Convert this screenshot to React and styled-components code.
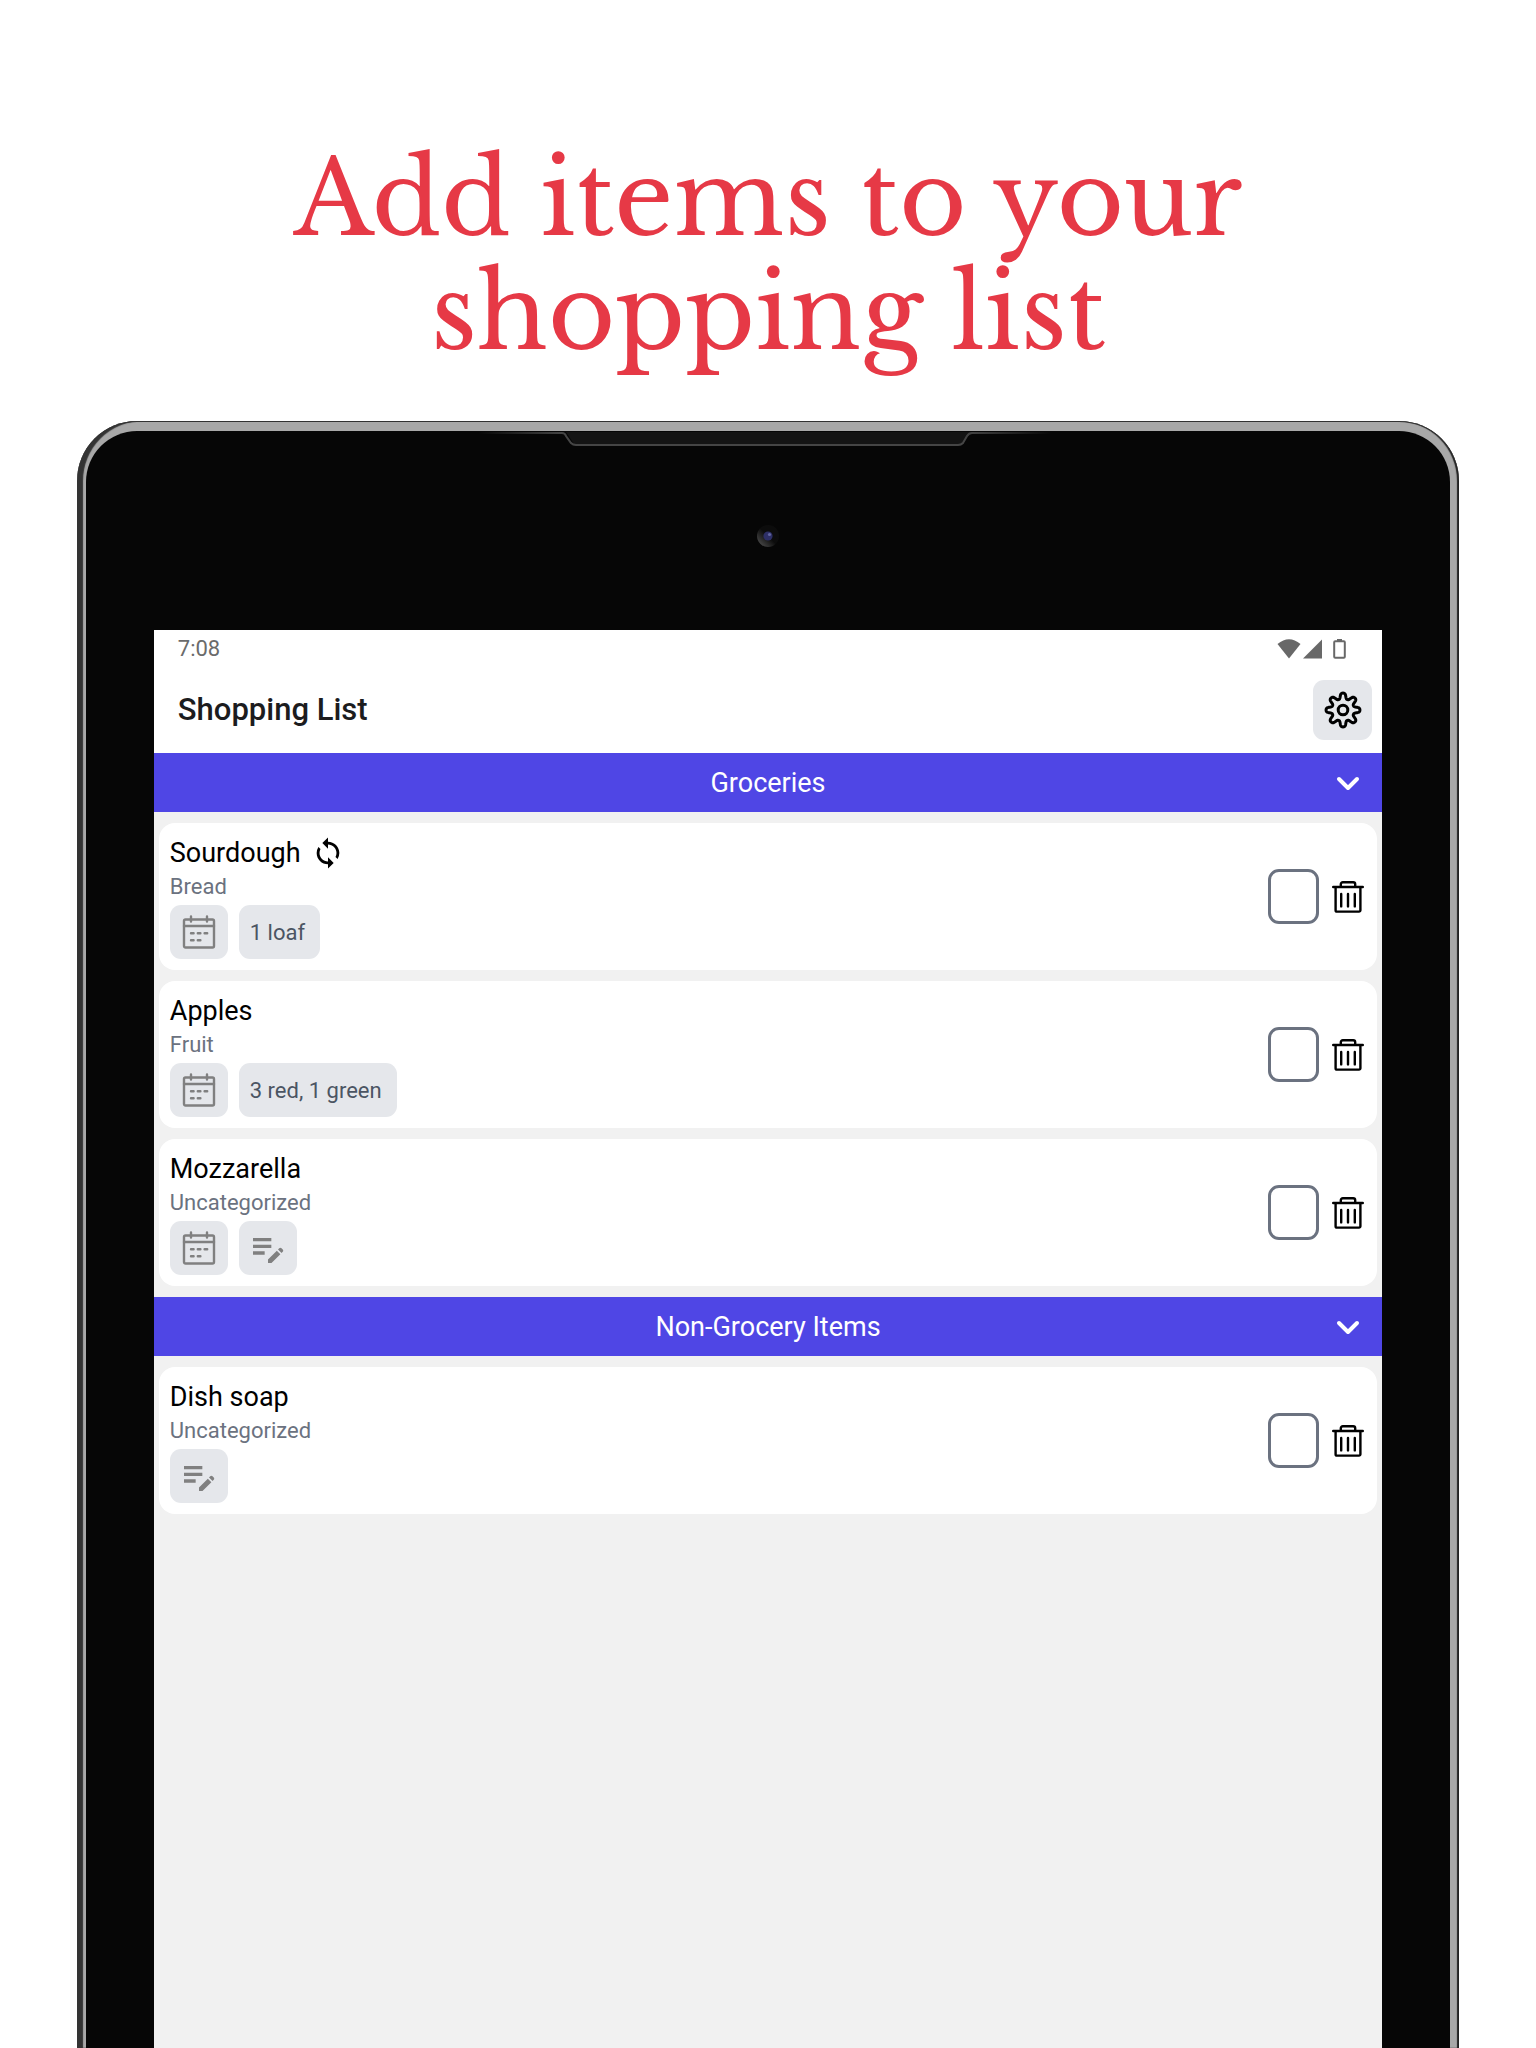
import React, { useState } from "react";
import styled, { createGlobalStyle } from "styled-components";
import { MdEditNote, MdSync } from "react-icons/md";

const GlobalStyle = createGlobalStyle`
  *, *::before, *::after { box-sizing: border-box; }
  html, body { margin: 0; background: #fff; }
  button { font: inherit; color: inherit; border: 0; padding: 0; cursor: pointer; }
  svg { display: block; flex: none; }
`;

const Page = styled.div`
  min-height: 100vh;
  display: flex;
  flex-direction: column;
  font-family: Roboto, "Liberation Sans", sans-serif;
  color: #000;
`;

const Headline = styled.h1`
  margin: 0 auto;
  padding: 142px 24px 51px;
  max-width: 1120px;
  text-align: center;
  font-family: "Libre Baskerville", "Liberation Serif", serif;
  font-weight: 400;
  font-size: 103px;
  line-height: 114px;
  color: #e63946;
`;

const Device = styled.main`
  flex: 1;
  display: flex;
  margin: 0 5%;
  padding: 10px 9px 0;
  border-radius: 60px 60px 0 0;
  background: #a8a8a8;
  box-shadow: inset 0 1px 0 #333, inset 6px 0 1px #333, inset -2px 0 1px #222;
`;

const Bezel = styled.div`
  flex: 1;
  display: flex;
  flex-direction: column;
  padding: 0 68px;
  border-radius: 51px 51px 0 0;
  background: #060606;
`;

const BezelTop = styled.div`
  height: 199px;
  display: flex;
  flex-direction: column;
  align-items: center;
  gap: 77px;
`;

const Screen = styled.div`
  flex: 1;
  display: flex;
  flex-direction: column;
  background: #f1f1f1;
`;

const StatusBar = styled.div`
  height: 37px;
  padding: 0 36px 0 24px;
  display: flex;
  align-items: center;
  justify-content: space-between;
  background: #fff;
  color: #6b6b6b;
  font-size: 22px;
`;

const AppBar = styled.header`
  height: 86px;
  padding: 0 10px 0 24px;
  display: flex;
  align-items: center;
  justify-content: space-between;
  background: #fff;
`;

const ScreenTitle = styled.h2`
  margin: 0;
  font-weight: 500;
  font-size: 31px;
  line-height: 38px;
  color: #1c1c1e;
`;

const SettingsButton = styled.button`
  width: 59px;
  height: 60px;
  display: grid;
  place-items: center;
  border-radius: 11px;
  background: #e5e7eb;
`;

const GroupHeader = styled.button`
  width: 100%;
  height: 59px;
  padding: 0 21px;
  display: grid;
  grid-template-columns: 1fr auto 1fr;
  align-items: center;
  background: #4f46e5;
  color: #fff;
  font-size: 27px;

  & > span { grid-column: 2; }
  & > svg { justify-self: end; }
`;

const ItemList = styled.ul`
  margin: 0;
  padding: 11px 5px;
  display: flex;
  flex-direction: column;
  gap: 11px;
  list-style: none;
`;

const Card = styled.li`
  padding: 11px 13px 11px 11px;
  display: flex;
  align-items: center;
  justify-content: space-between;
  border-radius: 16px;
  background: #fff;
`;

const ItemName = styled.label`
  display: flex;
  align-items: center;
  gap: 10px;
  font-size: 27px;
  line-height: 38px;
`;

const Category = styled.div`
  margin-bottom: 4px;
  font-size: 22px;
  line-height: 29px;
  color: #6b7280;
`;

const Chips = styled.div`
  display: flex;
  gap: 11px;
`;

const Chip = styled.button`
  min-width: 58px;
  height: 54px;
  padding: ${(p) => (p.$text ? "0 15px 0 11px" : "0")};
  display: flex;
  align-items: center;
  justify-content: center;
  border-radius: 11px;
  background: #e5e7eb;
  color: ${(p) => (p.$text ? "#4b5563" : "#808080")};
  font-size: 22px;
`;

const Actions = styled.div`
  display: flex;
  align-items: center;
  gap: 13px;
`;

const Check = styled.input`
  appearance: none;
  width: 51px;
  height: 55px;
  margin: 0;
  border: 3px solid #6b7280;
  border-radius: 11px;
  background: #fff;

  &:checked { background: #4f46e5; }
`;

const PlainButton = styled.button`
  background: none;
`;

function gearOutline() {
  const points = [];
  for (let i = 0; i < 240; i += 1) {
    const a = (i / 240) * Math.PI * 2;
    const r = 14.1 + (2.8 * Math.tanh(1.5 * Math.cos(8 * a))) / Math.tanh(1.5);
    points.push(`${(20 + r * Math.cos(a)).toFixed(2)} ${(20 + r * Math.sin(a)).toFixed(2)}`);
  }
  return `M${points.join("L")}Z`;
}

const GearIcon = () => (
  <svg width="40" height="40" viewBox="0 0 40 40" fill="none" stroke="#000" strokeWidth="3" strokeLinejoin="round">
    <path d={gearOutline()} />
    <circle cx="20" cy="20" r="4.8" />
  </svg>
);

const ChevronIcon = () => (
  <svg width="26" height="26" viewBox="0 0 26 26" fill="none" stroke="#fff" strokeWidth="4" strokeLinecap="round" strokeLinejoin="round">
    <path d="M4 9l9 9 9-9" />
  </svg>
);

const TrashIcon = () => (
  <svg width="32" height="32" viewBox="0 0 32 32" fill="none" stroke="#000" strokeWidth="2.4" strokeLinecap="round" strokeLinejoin="round">
    <path d="M1.2 6h29.6M3.6 6v23.2a1.4 1.4 0 0 0 1.4 1.4h22a1.4 1.4 0 0 0 1.4-1.4V6M8.8 6V3.2a2 2 0 0 1 2-2h10.4a2 2 0 0 1 2 2V6M9.2 13v12.4M16 13v12.4M22.8 13v12.4" />
  </svg>
);

const CalendarIcon = () => (
  <svg width="34" height="34" viewBox="0 0 34 34" fill="none" stroke="#808080" strokeWidth="2.4" strokeLinecap="round" strokeLinejoin="round">
    <rect x="2" y="4.5" width="30" height="28" rx="1.5" />
    <path d="M2 11h30M9 1.5v5M25 1.5v5M9 18.3h2.6M15.8 18.3h2.6M22.6 18.3h2.6M9 25.2h2.6M15.8 25.2h2.6" />
  </svg>
);

const StatusIcons = () => (
  <svg width="69" height="22" viewBox="0 0 69 22" role="img" aria-label="Wi-Fi, signal, battery">
    <path d="M0.5 6Q12 -3.5 23.5 6L12 20.5Z" fill="#686868" />
    <path d="M45 1.5V20.5H26Z" fill="#686868" />
    <rect x="57.2" y="3.2" width="10.6" height="16.6" rx="1" fill="none" stroke="#686868" strokeWidth="2" />
    <path d="M60 1h5v2h-5z" fill="#686868" />
  </svg>
);

const Speaker = () => (
  <svg width="580" height="17" viewBox="0 0 580 17" aria-hidden="true">
    <defs>
      <linearGradient id="lip" x1="0" x2="1" y1="0" y2="0">
        <stop offset="0" stopColor="#060606" />
        <stop offset="0.15" stopColor="#454545" />
        <stop offset="0.85" stopColor="#454545" />
        <stop offset="1" stopColor="#060606" />
      </linearGradient>
    </defs>
    <path d="M88 1l8 12q1 2 4 2h380q3 0 5-2l8-12z" fill="#141414" />
    <path d="M0 2h84q3 0 4 3l5 7q2 2 5 2h382q3 0 5-2l4-7q2-3 5-3h80" fill="none" stroke="url(#lip)" strokeWidth="2" />
  </svg>
);

const Camera = () => (
  <svg width="22" height="22" viewBox="0 0 22 22" aria-hidden="true">
    <defs>
      <linearGradient id="ring" x1="0.1" x2="0.5" y1="0.9" y2="0.5">
        <stop offset="0" stopColor="#4a4a4a" />
        <stop offset="1" stopColor="#0c0c0c" />
      </linearGradient>
    </defs>
    <circle cx="11" cy="11" r="11" fill="url(#ring)" />
    <circle cx="11" cy="11" r="4.6" fill="#2d2f66" />
    <circle cx="12.5" cy="9.5" r="1.6" fill="#6265a0" />
  </svg>
);

const groups = [
  {
    title: "Groceries",
    items: [
      { name: "Sourdough", category: "Bread", repeats: true, dated: true, note: "1 loaf" },
      { name: "Apples", category: "Fruit", dated: true, note: "3 red, 1 green" },
      { name: "Mozzarella", category: "Uncategorized", dated: true },
    ],
  },
  {
    title: "Non-Grocery Items",
    items: [{ name: "Dish soap", category: "Uncategorized" }],
  },
];

function Item({ item }) {
  const id = item.name.toLowerCase().replace(/\s+/g, "-");
  return (
    <Card>
      <div>
        <ItemName htmlFor={id}>
          {item.name}
          {item.repeats && <MdSync size={34} />}
        </ItemName>
        <Category>{item.category}</Category>
        <Chips>
          {item.dated && (
            <Chip type="button" aria-label="Set date">
              <CalendarIcon />
            </Chip>
          )}
          {item.note ? (
            <Chip type="button" $text>{item.note}</Chip>
          ) : (
            <Chip type="button" aria-label="Add note">
              <MdEditNote size={40} />
            </Chip>
          )}
        </Chips>
      </div>
      <Actions>
        <Check type="checkbox" id={id} />
        <PlainButton type="button" aria-label={`Delete ${item.name}`}>
          <TrashIcon />
        </PlainButton>
      </Actions>
    </Card>
  );
}

function Group({ group }) {
  const [open, setOpen] = useState(true);
  return (
    <section>
      <GroupHeader type="button" aria-expanded={open} onClick={() => setOpen(!open)}>
        <span>{group.title}</span>
        <ChevronIcon />
      </GroupHeader>
      {open && (
        <ItemList>
          {group.items.map((item) => (
            <Item key={item.name} item={item} />
          ))}
        </ItemList>
      )}
    </section>
  );
}

export default function App() {
  return (
    <Page>
      <GlobalStyle />
      <Headline>Add items to your shopping list</Headline>
      <Device>
        <Bezel>
          <BezelTop>
            <Speaker />
            <Camera />
          </BezelTop>
          <Screen>
            <StatusBar>
              <span>7:08</span>
              <StatusIcons />
            </StatusBar>
            <AppBar>
              <ScreenTitle>Shopping List</ScreenTitle>
              <SettingsButton type="button" aria-label="Settings">
                <GearIcon />
              </SettingsButton>
            </AppBar>
            {groups.map((group) => (
              <Group key={group.title} group={group} />
            ))}
          </Screen>
        </Bezel>
      </Device>
    </Page>
  );
}
